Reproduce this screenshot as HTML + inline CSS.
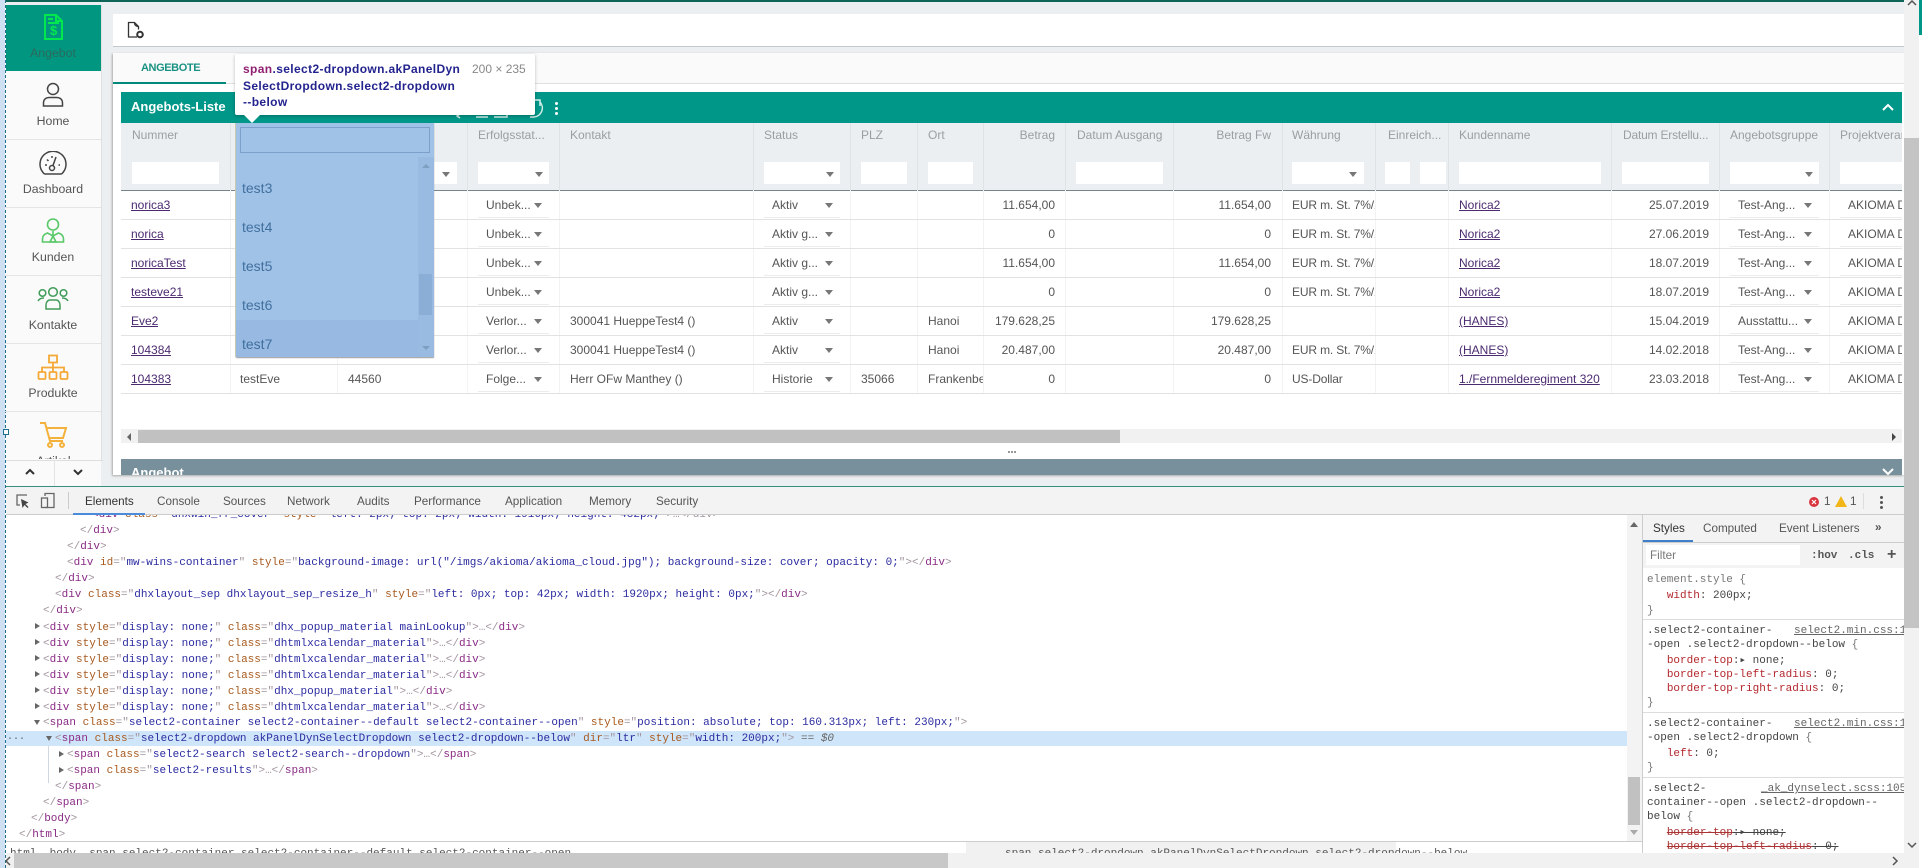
<!DOCTYPE html>
<html><head><meta charset="utf-8"><title>Angebot</title>
<style>
html,body{margin:0;padding:0;background:#fff}
#w{position:relative;width:1922px;height:868px;overflow:hidden;background:#fff;font-family:"Liberation Sans",sans-serif;font-size:12px;color:#555}
#w div,#w svg,#w a{position:absolute}
.r{left:0;width:1922px;height:29px;line-height:30px}
.r div,.r a{white-space:nowrap;overflow:hidden;height:29px;top:0}
.r a{color:#4b2a70;text-decoration:underline;left:131px}
.e{left:486px}.k{left:570px}.s{left:772px}.p{left:861px}.o{left:928px;width:55px}
.b{left:983px;width:72px;text-align:right}.f{left:1173px;width:98px;text-align:right}
.w{left:1292px;width:83px;letter-spacing:-.15px}.r a.n{left:1459px}.d{left:1611px;width:98px;text-align:right}
.g{left:1738px}.j{left:1848px;width:54px}
.a{width:0;height:0;border-left:4px solid transparent;border-right:4px solid transparent;border-top:5px solid #777;top:13px!important;height:0!important;overflow:visible!important}
.a1{left:534px}.a2{left:825px}.a3{left:1804px}
.v{top:123px;width:1px;height:270px;background:linear-gradient(#e0e3e6 67px,#f2f3f4 67px)}
.h{top:127px;color:#9a9ea2;white-space:nowrap;line-height:16px}
.i{top:162px;height:22px;background:#fff}
.t{top:172px;width:0;height:0;border-left:4px solid transparent;border-right:4px solid transparent;border-top:5px solid #777}
.sep{left:121px;width:1781px;height:1px;background:#e2e2e2}
.u{top:190px;height:203px;background:repeating-linear-gradient(to bottom,transparent 0,transparent 27px,#ececec 27px,#ececec 28px,transparent 28px,transparent 29px)}
.l{left:5px;width:96px;text-align:center;font-size:12.3px;color:#555;line-height:16px}
.hr{left:5px;width:96px;height:1px;background:#e4e4e4}
.tab{top:494px;font-size:11.7px;color:#555;line-height:16px;white-space:nowrap}
.m{font-family:"Liberation Mono",monospace;font-size:11px;line-height:16px;white-space:pre;color:#a3959f;height:16px;margin-top:1px}
.m b,.y b{font-weight:normal;color:#8a2a84}.m i,.y i{font-style:normal;color:#a8591d}.m u,.y u{text-decoration:none;color:#2b2ba0}
.y{left:1647px;font-family:"Liberation Mono",monospace;font-size:11px;line-height:14px;white-space:pre;color:#444;height:14px;width:257px;overflow:hidden;margin-top:2px}
.y em{font-style:normal;color:#b3272d}
.lk{color:#666;text-decoration:underline;position:absolute;background:#fff;padding-left:4px}
.ln{left:1643px;width:261px;height:1px;background:#dcdcdc}
.tr{width:0;height:0;border-top:3.5px solid transparent;border-bottom:3.5px solid transparent;border-left:5px solid #666}
.it{left:242px;font-size:14px;color:#41709f;line-height:18px}
.tt{left:243px;font-size:12px;font-weight:bold;line-height:16px;color:#23238e;white-space:nowrap;letter-spacing:.37px}
</style></head><body>
<div id="w">
<!-- left highlight margin -->
<div style="left:0;top:0;width:5px;height:868px;background:#cfe0f3"></div>
<div style="left:5px;top:0;width:0;height:868px;border-left:1px dashed #1f6f8f"></div>
<!-- app background -->
<div style="left:6px;top:0;width:1898px;height:487px;background:#eceff1"></div>
<div style="left:6px;top:0;width:1898px;height:2px;background:#0e6557"></div>
<div style="left:1919px;top:0;width:3px;height:35px;background:#009688"></div>
<!-- sidebar -->
<div style="left:6px;top:5px;width:95px;height:481px;background:#fafafa;overflow:hidden">
</div>
<div style="left:101px;top:5px;width:1px;height:455px;background:#e0e0e0"></div>
<div style="left:6px;top:5px;width:95px;height:66px;background:#00967f"></div>
<svg style="left:40px;top:13px" width="26" height="28" viewBox="0 0 26 28" fill="none" stroke="#00e84e" stroke-width="2"><path d="M5 2h11l6 6v18H5z"/><path d="M16 2v6h6M8 6h5M8 10h11"/></svg>
<div style="left:50px;top:23px;font-size:13px;font-weight:bold;color:#00e84e;line-height:16px">$</div>
<div class="l" style="top:45px;color:#2a6a5e">Angebot</div>
<svg style="left:40px;top:81px" width="26" height="28" viewBox="0 0 26 28" fill="none" stroke="#444" stroke-width="1.5"><circle cx="13" cy="8" r="5.5"/><path d="M3.5 25v-3c0-4 3-5.500 6-5.500h7c3 0 6 1.500 6 5.500v3z"/></svg>
<div class="l" style="top:113px">Home</div>
<div class="hr" style="top:139px"></div>
<svg style="left:39px;top:151px" width="28" height="26" viewBox="0 0 28 26" fill="none" stroke="#444" stroke-width="1.5"><path d="M6 23h16a3 3 0 0 0 2-1.500A13 13 0 1 0 4 21.500 3 3 0 0 0 6 23z"/><circle cx="13" cy="17" r="2.500"/><path d="M14 14.500 17 6M6 14h2M8 8.500l1.500 1.500M13 5v2M21 14h-1.500"/></svg>
<div class="l" style="top:181px">Dashboard</div>
<div class="hr" style="top:207px"></div>
<svg style="left:40px;top:217px" width="26" height="28" viewBox="0 0 26 28" fill="none" stroke="#58c868" stroke-width="1.6"><circle cx="13" cy="7.500" r="5.500"/><path d="M2.500 25v-3c0-3 2-5 5-6l5.500 3 5.500-3c3 1 5 3 5 6v3z"/><path d="M13 14v4M13 19l-3 6h6z"/></svg>
<div class="l" style="top:249px">Kunden</div>
<div class="hr" style="top:275px"></div>
<svg style="left:37px;top:286px" width="32" height="26" viewBox="0 0 32 26" fill="none" stroke="#3f9b58" stroke-width="1.5"><circle cx="5.500" cy="7" r="3.300"/><circle cx="16" cy="6" r="4.300"/><circle cx="26.500" cy="7" r="3.300"/><path d="M9 23v-4c0-3 2-5 4-5h6c2 0 4 2 4 5v4zM1 15c1-2 3-3 6-3M31 15c-1-2-3-3-6-3"/></svg>
<div class="l" style="top:317px">Kontakte</div>
<div class="hr" style="top:343px"></div>
<svg style="left:37px;top:354px" width="32" height="27" viewBox="0 0 32 27" fill="none" stroke="#f4a936" stroke-width="1.800"><rect x="12" y="1.500" width="8" height="7"/><rect x="1.500" y="18" width="7" height="7" rx="1"/><rect x="12.500" y="18" width="7" height="7" rx="1"/><rect x="23.500" y="18" width="7" height="7" rx="1"/><path d="M16 8.500V18M5 18v-4.500h22V18"/></svg>
<div class="l" style="top:385px">Produkte</div>
<div class="hr" style="top:411px"></div>
<svg style="left:39px;top:421px" width="29" height="28" viewBox="0 0 29 28" fill="none" stroke="#f4b23c" stroke-width="2"><path d="M1 2h5l5 18h13"/><path d="M7 7h20l-3 10H10"/><circle cx="11" cy="24" r="2"/><circle cx="23" cy="24" r="2"/></svg>
<div style="left:6px;top:453px;width:95px;height:6px;overflow:hidden"><div class="l" style="left:0;width:95px;top:0">Artikel</div></div>
<div style="left:6px;top:460px;width:97px;height:1px;background:#dedede"></div>
<div style="left:54px;top:461px;width:1px;height:25px;background:#e4e4e4"></div>
<svg style="left:24px;top:468px" width="12" height="8" viewBox="0 0 12 8" fill="none" stroke="#333" stroke-width="2"><path d="M2 6l4-4 4 4"/></svg>
<svg style="left:72px;top:468px" width="12" height="8" viewBox="0 0 12 8" fill="none" stroke="#333" stroke-width="2"><path d="M2 2l4 4 4-4"/></svg>
<div style="left:6px;top:486px;width:1898px;height:1px;background:#35907f"></div>
<div style="left:3px;top:429px;width:4px;height:4px;background:#fff;border:1px solid #1f6f8f"></div>
<!-- toolbar -->
<div style="left:113px;top:14px;width:1791px;height:32px;background:#fff;border-bottom:1px solid #c4c8ca"></div>
<svg style="left:125px;top:20px" width="22" height="20" viewBox="0 0 22 20" fill="none" stroke="#333" stroke-width="1.300"><path d="M12 17H3.500V2.500h6l4 4v3"/><path d="M9.500 2.500c0 2 1 4 4 4"/><circle cx="15" cy="14.500" r="2.800" stroke-width="2"/></svg>
<!-- main panel -->
<div style="left:113px;top:53px;width:1791px;height:422px;background:#fff;box-shadow:-1px 1px 2px #aaa"></div>
<div style="left:113px;top:53px;width:1791px;height:30px;background:#fafafa;border-bottom:1px solid #e0e0e0"></div>
<div style="left:113px;top:82px;width:113px;height:1.500px;background:#00897b"></div>
<div style="left:141px;top:60px;font-size:11px;font-weight:bold;color:#1a9283;letter-spacing:-.4px;line-height:16px">ANGEBOTE</div>
<!-- list header -->
<div style="left:121px;top:92px;width:1781px;height:31px;background:#009688"></div>
<div style="left:131px;top:98px;font-size:13px;font-weight:bold;color:#fff;line-height:18px">Angebots-Liste</div>
<svg style="left:452px;top:96px" width="100" height="26" viewBox="0 0 100 26" fill="none" stroke="#d5efe9" stroke-width="1.500"><path d="M8 18l-3 2 3 2M24 21h12M42 16h13v5H42M88 6a9 9 0 0 1-6 15h-4"/><path d="M82 4h6v6"/></svg>
<div style="left:555px;top:102px;width:3px;height:3px;background:#fff;border-radius:2px;box-shadow:0 5px 0 #fff,0 10px 0 #fff"></div>
<svg style="left:1881px;top:103px" width="14" height="9" viewBox="0 0 14 9" fill="none" stroke="#fff" stroke-width="2"><path d="M2 7l5-5 5 5"/></svg>
<!-- grid header -->
<div style="left:121px;top:123px;width:1781px;height:67px;background:#eceff1;border-bottom:1px solid #76848c"></div>
<div class="v" style="left:230px"></div><div class="v" style="left:337px"></div><div class="v" style="left:467px"></div><div class="v" style="left:559px"></div><div class="v" style="left:753px"></div><div class="v" style="left:850px"></div><div class="v" style="left:917px"></div><div class="v" style="left:983px"></div><div class="v" style="left:1065px"></div><div class="v" style="left:1173px"></div><div class="v" style="left:1282px"></div><div class="v" style="left:1375px"></div><div class="v" style="left:1448px"></div><div class="v" style="left:1611px"></div><div class="v" style="left:1719px"></div><div class="v" style="left:1829px"></div>
<div class="h" style="left:132px">Nummer</div>
<div class="h" style="left:478px">Erfolgsstat...</div>
<div class="h" style="left:570px">Kontakt</div>
<div class="h" style="left:764px">Status</div>
<div class="h" style="left:861px">PLZ</div>
<div class="h" style="left:928px">Ort</div>
<div class="h" style="left:983px;width:72px;text-align:right">Betrag</div>
<div class="h" style="left:1077px">Datum Ausgang</div>
<div class="h" style="left:1173px;width:98px;text-align:right">Betrag Fw</div>
<div class="h" style="left:1292px">Währung</div>
<div class="h" style="left:1388px">Einreich...</div>
<div class="h" style="left:1459px">Kundenname</div>
<div class="h" style="left:1623px;letter-spacing:-.2px">Datum Erstellu...</div>
<div class="h" style="left:1730px">Angebotsgruppe</div>
<div class="h" style="left:1840px;width:62px;overflow:hidden">Projektverantw</div>
<div class="i" style="left:132px;width:87px"></div>
<div class="i" style="left:345px;width:112px"></div><div class="t" style="left:442px"></div>
<div class="i" style="left:478px;width:71px"></div><div class="t" style="left:535px"></div>
<div class="i" style="left:764px;width:76px"></div><div class="t" style="left:826px"></div>
<div class="i" style="left:861px;width:46px"></div>
<div class="i" style="left:928px;width:45px"></div>
<div class="i" style="left:1076px;width:87px"></div>
<div class="i" style="left:1292px;width:72px"></div><div class="t" style="left:1349px"></div>
<div class="i" style="left:1385px;width:25px"></div>
<div class="i" style="left:1420px;width:26px"></div>
<div class="i" style="left:1459px;width:142px"></div>
<div class="i" style="left:1622px;width:87px"></div>
<div class="i" style="left:1730px;width:89px"></div><div class="t" style="left:1805px"></div>
<div class="i" style="left:1840px;width:62px"></div>
<!-- separators -->
<div class="sep" style="top:219px"></div><div class="sep" style="top:248px"></div><div class="sep" style="top:277px"></div><div class="sep" style="top:306px"></div><div class="sep" style="top:335px"></div><div class="sep" style="top:364px"></div><div class="sep" style="top:393px"></div>
<div class="u" style="left:478px;width:71px"></div><div class="u" style="left:764px;width:76px"></div><div class="u" style="left:1730px;width:89px"></div><div class="u" style="left:1840px;width:62px"></div>
<!-- rows -->
<div class="r" style="top:190px"><a>norica3</a><div class="e">Unbek...</div><div class="a a1"></div><div class="s">Aktiv</div><div class="a a2"></div><div class="b">11.654,00</div><div class="f">11.654,00</div><div class="w">EUR m. St. 7%/19%</div><a class="n">Norica2</a><div class="d">25.07.2019</div><div class="g">Test-Ang...</div><div class="a a3"></div><div class="j">AKIOMA Deutschland</div></div>
<div class="r" style="top:219px"><a>norica</a><div class="e">Unbek...</div><div class="a a1"></div><div class="s">Aktiv g...</div><div class="a a2"></div><div class="b">0</div><div class="f">0</div><div class="w">EUR m. St. 7%/19%</div><a class="n">Norica2</a><div class="d">27.06.2019</div><div class="g">Test-Ang...</div><div class="a a3"></div><div class="j">AKIOMA Deutschland</div></div>
<div class="r" style="top:248px"><a>noricaTest</a><div class="e">Unbek...</div><div class="a a1"></div><div class="s">Aktiv g...</div><div class="a a2"></div><div class="b">11.654,00</div><div class="f">11.654,00</div><div class="w">EUR m. St. 7%/19%</div><a class="n">Norica2</a><div class="d">18.07.2019</div><div class="g">Test-Ang...</div><div class="a a3"></div><div class="j">AKIOMA Deutschland</div></div>
<div class="r" style="top:277px"><a>testeve21</a><div class="e">Unbek...</div><div class="a a1"></div><div class="s">Aktiv g...</div><div class="a a2"></div><div class="b">0</div><div class="f">0</div><div class="w">EUR m. St. 7%/19%</div><a class="n">Norica2</a><div class="d">18.07.2019</div><div class="g">Test-Ang...</div><div class="a a3"></div><div class="j">AKIOMA Deutschland</div></div>
<div class="r" style="top:306px"><a>Eve2</a><div class="e">Verlor...</div><div class="a a1"></div><div class="k">300041 HueppeTest4 ()</div><div class="s">Aktiv</div><div class="a a2"></div><div class="o">Hanoi</div><div class="b">179.628,25</div><div class="f">179.628,25</div><a class="n">(HANES)</a><div class="d">15.04.2019</div><div class="g">Ausstattu...</div><div class="a a3"></div><div class="j">AKIOMA Deutschland</div></div>
<div class="r" style="top:335px"><a>104384</a><div class="e">Verlor...</div><div class="a a1"></div><div class="k">300041 HueppeTest4 ()</div><div class="s">Aktiv</div><div class="a a2"></div><div class="o">Hanoi</div><div class="b">20.487,00</div><div class="f">20.487,00</div><div class="w">EUR m. St. 7%/19%</div><a class="n">(HANES)</a><div class="d">14.02.2018</div><div class="g">Test-Ang...</div><div class="a a3"></div><div class="j">AKIOMA Deutschland</div></div>
<div class="r" style="top:364px"><a>104383</a><div style="left:240px">testEve</div><div style="left:348px">44560</div><div class="e">Folge...</div><div class="a a1"></div><div class="k">Herr OFw Manthey ()</div><div class="s">Historie</div><div class="a a2"></div><div class="p">35066</div><div class="o">Frankenberg</div><div class="b">0</div><div class="f">0</div><div class="w">US-Dollar</div><a class="n">1./Fernmelderegiment 320</a><div class="d">23.03.2018</div><div class="g">Test-Ang...</div><div class="a a3"></div><div class="j">AKIOMA Deutschland</div></div>
<!-- list horizontal scrollbar -->
<div style="left:121px;top:429px;width:1781px;height:14px;background:#f1f1f1"></div>
<div style="left:138px;top:430px;width:982px;height:13px;background:#c1c1c1"></div>
<div style="left:127px;top:433px;width:0;height:0;border-top:4px solid transparent;border-bottom:4px solid transparent;border-right:4px solid #666"></div>
<div style="left:1892px;top:433px;width:0;height:0;border-top:4px solid transparent;border-bottom:4px solid transparent;border-left:4px solid #444"></div>
<div style="left:1008px;top:451px;width:2px;height:2px;background:#999;box-shadow:3px 0 0 #999,6px 0 0 #999"></div>
<!-- Angebot panel bar -->
<div style="left:121px;top:459px;width:1781px;height:16px;background:#78909c;overflow:hidden">
  <div style="left:10px;top:5px;font-size:13px;font-weight:bold;color:#fff;line-height:18px">Angebot</div>
  <svg style="left:1760px;top:9px" width="14" height="7" viewBox="0 0 14 7" fill="none" stroke="#fff" stroke-width="2"><path d="M2 1l5 5 5-5"/></svg>
</div>
<!-- dropdown overlay -->
<div style="left:236px;top:123px;width:198px;height:234px;background:#a0c2e7;box-shadow:-1px 0 0 #c9c9ae,0 1px 1px #999"></div>
<div style="left:236px;top:320px;width:198px;height:37px;background:#98b9e1"></div>
<div style="left:418px;top:157px;width:16px;height:200px;background:#99bbe2"></div>
<div style="left:240px;top:127px;width:188px;height:24px;border:1px solid #7ba0cb"></div>
<div style="left:422px;top:164px;width:0;height:0;border-left:4px solid transparent;border-right:4px solid transparent;border-bottom:4px solid #7f9fc2"></div>
<div style="left:422px;top:346px;width:0;height:0;border-left:4px solid transparent;border-right:4px solid transparent;border-top:4px solid #7f9fc2"></div>
<div style="left:419px;top:274px;width:13px;height:41px;background:#8baed6"></div>
<div class="it" style="top:179px">test3</div>
<div class="it" style="top:218px">test4</div>
<div class="it" style="top:257px">test5</div>
<div class="it" style="top:296px">test6</div>
<div class="it" style="top:335px">test7</div>
<!-- tooltip -->
<div style="left:235px;top:54px;width:300px;height:61px;background:#fff;border-radius:2px;box-shadow:0 1px 3px rgba(0,0,0,.25)"></div>
<div style="left:244px;top:115px;width:0;height:0;border-left:8px solid transparent;border-right:8px solid transparent;border-top:8px solid #fff"></div>
<div class="tt" style="top:61px"><span style="color:#8f1f72">span</span>.select2-dropdown.akPanelDyn</div>
<div class="tt" style="top:78px">SelectDropdown.select2-dropdown</div>
<div class="tt" style="top:94px">--below</div>
<div style="left:472px;top:61px;font-size:12px;line-height:16px;color:#888;white-space:nowrap">200 × 235</div>
<!-- devtools -->
<div style="left:6px;top:487px;width:1898px;height:27px;background:#f3f3f3;border-bottom:1px solid #ccc"></div>
<svg style="left:15px;top:494px" width="15" height="15" viewBox="0 0 15 15" fill="none"><path d="M12 1H2v10h3" stroke="#666" stroke-width="1.300"/><path d="M6 5l1.500 9 2-3 3 3 1-1-3-3 3-1.500z" fill="#444"/></svg>
<svg style="left:40px;top:492px" width="16" height="17" viewBox="0 0 16 17" fill="none" stroke="#666" stroke-width="1.300"><path d="M5 4V1.500h9V15.500h-9"/><rect x="1.500" y="6" width="6" height="9.500"/></svg>
<div style="left:68px;top:492px;width:1px;height:17px;background:#ccc"></div>
<div class="tab" style="left:85px;color:#333">Elements</div>
<div class="tab" style="left:157px">Console</div>
<div class="tab" style="left:223px">Sources</div>
<div class="tab" style="left:287px">Network</div>
<div class="tab" style="left:357px">Audits</div>
<div class="tab" style="left:414px">Performance</div>
<div class="tab" style="left:505px">Application</div>
<div class="tab" style="left:589px">Memory</div>
<div class="tab" style="left:656px">Security</div>
<div style="left:73px;top:513px;width:72px;height:2px;background:#4b8bd9"></div>
<svg style="left:1809px;top:497px" width="10" height="10" viewBox="0 0 10 10"><circle cx="5" cy="5" r="5" fill="#d9363e"/><path d="M3 3l4 4M7 3l-4 4" stroke="#fff" stroke-width="1.200"/></svg>
<div class="tab" style="left:1824px">1</div>
<svg style="left:1835px;top:496px" width="12" height="11" viewBox="0 0 12 11"><path d="M6 0l6 11H0z" fill="#f2b61a"/></svg>
<div class="tab" style="left:1850px">1</div>
<div style="left:1863px;top:493px;width:1px;height:16px;background:#ddd"></div>
<div style="left:1880px;top:496px;width:3px;height:3px;background:#555;border-radius:2px;box-shadow:0 5px 0 #555,0 10px 0 #555"></div>
<!-- DOM tree -->
<div style="left:6px;top:515px;width:1621px;height:327px;overflow:hidden;background:#fff">
<div style="left:0;top:216px;width:1621px;height:15px;background:#cfe5fa"></div>
<div style="left:42px;top:231px;width:1px;height:37px;background:#cfd8e0"></div>
<div class="m" style="left:86px;top:-9px"><b>&lt;div</b> <i>class</i>="<u>dhxwin_fr_cover</u>" <i>style</i>="<u>left: 2px; top: 2px; width: 1916px; height: 482px;</u>"&gt;…&lt;/div&gt;</div>
<div class="m" style="left:74px;top:7px">&lt;/<b>div</b>&gt;</div>
<div class="m" style="left:61px;top:23px">&lt;/<b>div</b>&gt;</div>
<div class="m" style="left:61px;top:39px">&lt;<b>div</b> <i>id</i>="<u>mw-wins-container</u>" <i>style</i>="<u>background-image: url("/imgs/akioma/akioma_cloud.jpg"); background-size: cover; opacity: 0;</u>"&gt;&lt;/<b>div</b>&gt;</div>
<div class="m" style="left:49px;top:55px">&lt;/<b>div</b>&gt;</div>
<div class="m" style="left:49px;top:71px">&lt;<b>div</b> <i>class</i>="<u>dhxlayout_sep dhxlayout_sep_resize_h</u>" <i>style</i>="<u>left: 0px; top: 42px; width: 1920px; height: 0px;</u>"&gt;&lt;/<b>div</b>&gt;</div>
<div class="m" style="left:37px;top:87px">&lt;/<b>div</b>&gt;</div>
<div class="tr" style="left:29px;top:108px"></div><div class="m" style="left:37px;top:104px">&lt;<b>div</b> <i>style</i>="<u>display: none;</u>" <i>class</i>="<u>dhx_popup_material mainLookup</u>"&gt;…&lt;/<b>div</b>&gt;</div>
<div class="tr" style="left:29px;top:124px"></div><div class="m" style="left:37px;top:120px">&lt;<b>div</b> <i>style</i>="<u>display: none;</u>" <i>class</i>="<u>dhtmlxcalendar_material</u>"&gt;…&lt;/<b>div</b>&gt;</div>
<div class="tr" style="left:29px;top:140px"></div><div class="m" style="left:37px;top:136px">&lt;<b>div</b> <i>style</i>="<u>display: none;</u>" <i>class</i>="<u>dhtmlxcalendar_material</u>"&gt;…&lt;/<b>div</b>&gt;</div>
<div class="tr" style="left:29px;top:156px"></div><div class="m" style="left:37px;top:152px">&lt;<b>div</b> <i>style</i>="<u>display: none;</u>" <i>class</i>="<u>dhtmlxcalendar_material</u>"&gt;…&lt;/<b>div</b>&gt;</div>
<div class="tr" style="left:29px;top:172px"></div><div class="m" style="left:37px;top:168px">&lt;<b>div</b> <i>style</i>="<u>display: none;</u>" <i>class</i>="<u>dhx_popup_material</u>"&gt;…&lt;/<b>div</b>&gt;</div>
<div class="tr" style="left:29px;top:188px"></div><div class="m" style="left:37px;top:184px">&lt;<b>div</b> <i>style</i>="<u>display: none;</u>" <i>class</i>="<u>dhtmlxcalendar_material</u>"&gt;…&lt;/<b>div</b>&gt;</div>
<div style="left:28px;top:205px;width:0;height:0;border-left:3.500px solid transparent;border-right:3.500px solid transparent;border-top:5px solid #666"></div><div class="m" style="left:37px;top:199px">&lt;<b>span</b> <i>class</i>="<u>select2-container select2-container--default select2-container--open</u>" <i>style</i>="<u>position: absolute; top: 160.313px; left: 230px;</u>"&gt;</div>
<div style="left:40px;top:221px;width:0;height:0;border-left:3.500px solid transparent;border-right:3.500px solid transparent;border-top:5px solid #666"></div><div class="m" style="left:49px;top:215px">&lt;<b>span</b> <i>class</i>="<u>select2-dropdown akPanelDynSelectDropdown select2-dropdown--below</u>" <i>dir</i>="<u>ltr</u>" <i>style</i>="<u>width: 200px;</u>"&gt; <span style="color:#666">== <em>$0</em></span></div>
<div class="m" style="left:1px;top:214px;color:#777;font-weight:bold;font-size:10px">...</div>
<div class="tr" style="left:53px;top:236px"></div><div class="m" style="left:61px;top:231px">&lt;<b>span</b> <i>class</i>="<u>select2-search select2-search--dropdown</u>"&gt;…&lt;/<b>span</b>&gt;</div>
<div class="tr" style="left:53px;top:252px"></div><div class="m" style="left:61px;top:247px">&lt;<b>span</b> <i>class</i>="<u>select2-results</u>"&gt;…&lt;/<b>span</b>&gt;</div>
<div class="m" style="left:49px;top:263px">&lt;/<b>span</b>&gt;</div>
<div class="m" style="left:37px;top:279px">&lt;/<b>span</b>&gt;</div>
<div class="m" style="left:25px;top:295px">&lt;/<b>body</b>&gt;</div>
<div class="m" style="left:13px;top:311px">&lt;/<b>html</b>&gt;</div>
</div>
<!-- dom scrollbar -->
<div style="left:1627px;top:515px;width:15px;height:327px;background:#f3f3f3"></div>
<div style="left:1628px;top:777px;width:12px;height:48px;background:#c1c1c1"></div>
<div style="left:1630px;top:522px;width:0;height:0;border-left:4px solid transparent;border-right:4px solid transparent;border-bottom:5px solid #666"></div>
<div style="left:1630px;top:830px;width:0;height:0;border-left:4px solid transparent;border-right:4px solid transparent;border-top:5px solid #aaa"></div>
<!-- breadcrumb -->
<div style="left:6px;top:841px;width:1636px;height:1px;background:#ccc"></div>
<div style="left:966px;top:842px;width:430px;height:11px;background:#f1f1f1"></div>
<div class="m" style="left:10px;top:846px;margin:0;color:#555;height:7px;overflow:hidden">html  body  span.select2-container.select2-container--default.select2-container--open</div>
<div class="m" style="left:1005px;top:846px;margin:0;color:#555;height:7px;overflow:hidden">span.select2-dropdown.akPanelDynSelectDropdown.select2-dropdown--below</div>
<!-- styles pane -->
<div style="left:1642px;top:515px;width:1px;height:338px;background:#ccc"></div>
<div style="left:1643px;top:515px;width:261px;height:27px;background:#f3f3f3;border-bottom:1px solid #ccc"></div>
<div class="tab" style="left:1653px;top:521px;color:#333">Styles</div>
<div class="tab" style="left:1703px;top:521px">Computed</div>
<div class="tab" style="left:1779px;top:521px">Event Listeners</div>
<div class="tab" style="left:1875px;top:520px;font-weight:bold">»</div>
<div style="left:1643px;top:540px;width:50px;height:2px;background:#3f7ec9"></div>
<div style="left:1643px;top:543px;width:261px;height:25px;background:#f3f3f3"></div>
<div style="left:1646px;top:545px;width:154px;height:20px;background:#fff"></div>
<div class="tab" style="left:1650px;top:548px;color:#777">Filter</div>
<div class="y" style="left:1811px;top:547px;width:40px;font-weight:bold;color:#555">:hov</div>
<div class="y" style="left:1848px;top:547px;width:40px;font-weight:bold;color:#555">.cls</div>
<div style="left:1887px;top:546px;font-size:16px;line-height:18px;color:#555;font-weight:bold">+</div>
<div class="y" style="top:571px;color:#777">element.style {</div>
<div class="y" style="top:587px">   <em>width</em>: 200px;</div>
<div class="y" style="top:602px;color:#777">}</div>
<div class="ln" style="top:619px"></div>
<div class="y" style="top:622px">.select2-container-<span class="lk" style="left:143px">select2.min.css:1</span></div>
<div class="y" style="top:636px">-open .select2-dropdown--below <span style="color:#777">{</span></div>
<div class="y" style="top:652px">   <em>border-top</em>:▸ none;</div>
<div class="y" style="top:666px">   <em>border-top-left-radius</em>: 0;</div>
<div class="y" style="top:680px">   <em>border-top-right-radius</em>: 0;</div>
<div class="y" style="top:694px;color:#777">}</div>
<div class="ln" style="top:712px"></div>
<div class="y" style="top:715px">.select2-container-<span class="lk" style="left:143px">select2.min.css:1</span></div>
<div class="y" style="top:729px">-open .select2-dropdown <span style="color:#777">{</span></div>
<div class="y" style="top:745px">   <em>left</em>: 0;</div>
<div class="y" style="top:759px;color:#777">}</div>
<div class="ln" style="top:777px"></div>
<div class="y" style="top:780px">.select2-<span class="lk" style="left:110px">_ak_dynselect.scss:105</span></div>
<div class="y" style="top:794px">container--open .select2-dropdown--</div>
<div class="y" style="top:808px">below <span style="color:#777">{</span></div>
<div class="y" style="top:824px">   <em style="text-decoration:line-through;color:#a33">border-top</em><s style="color:#444">:▸ none;</s></div>
<div class="y" style="top:838px">   <em style="text-decoration:line-through;color:#a33">border-top-left-radius</em><s style="color:#444">: 0;</s></div>
<!-- page scrollbars -->
<div style="left:1904px;top:0;width:15px;height:868px;background:#f1f1f1"></div>
<div style="left:1904px;top:138px;width:15px;height:490px;background:#c4c4c4"></div>
<svg style="left:1907px;top:0" width="10" height="7" viewBox="0 0 10 7" fill="none" stroke="#555" stroke-width="1.500"><path d="M1 5l4-4 4 4"/></svg>
<svg style="left:1907px;top:842px" width="10" height="7" viewBox="0 0 10 7" fill="none" stroke="#555" stroke-width="1.500"><path d="M1 1l4 4 4-4"/></svg>
<div style="left:6px;top:853px;width:1898px;height:15px;background:#f1f1f1"></div>
<div style="left:14px;top:853px;width:934px;height:15px;background:#c8c8c8"></div>
<svg style="left:4px;top:856px" width="8" height="10" viewBox="0 0 8 10" fill="none" stroke="#555" stroke-width="1.500"><path d="M6 1L2 5l4 4"/></svg>
<svg style="left:1891px;top:856px" width="8" height="10" viewBox="0 0 8 10" fill="none" stroke="#555" stroke-width="1.500"><path d="M2 1l4 4-4 4"/></svg>
</div>
</body></html>
